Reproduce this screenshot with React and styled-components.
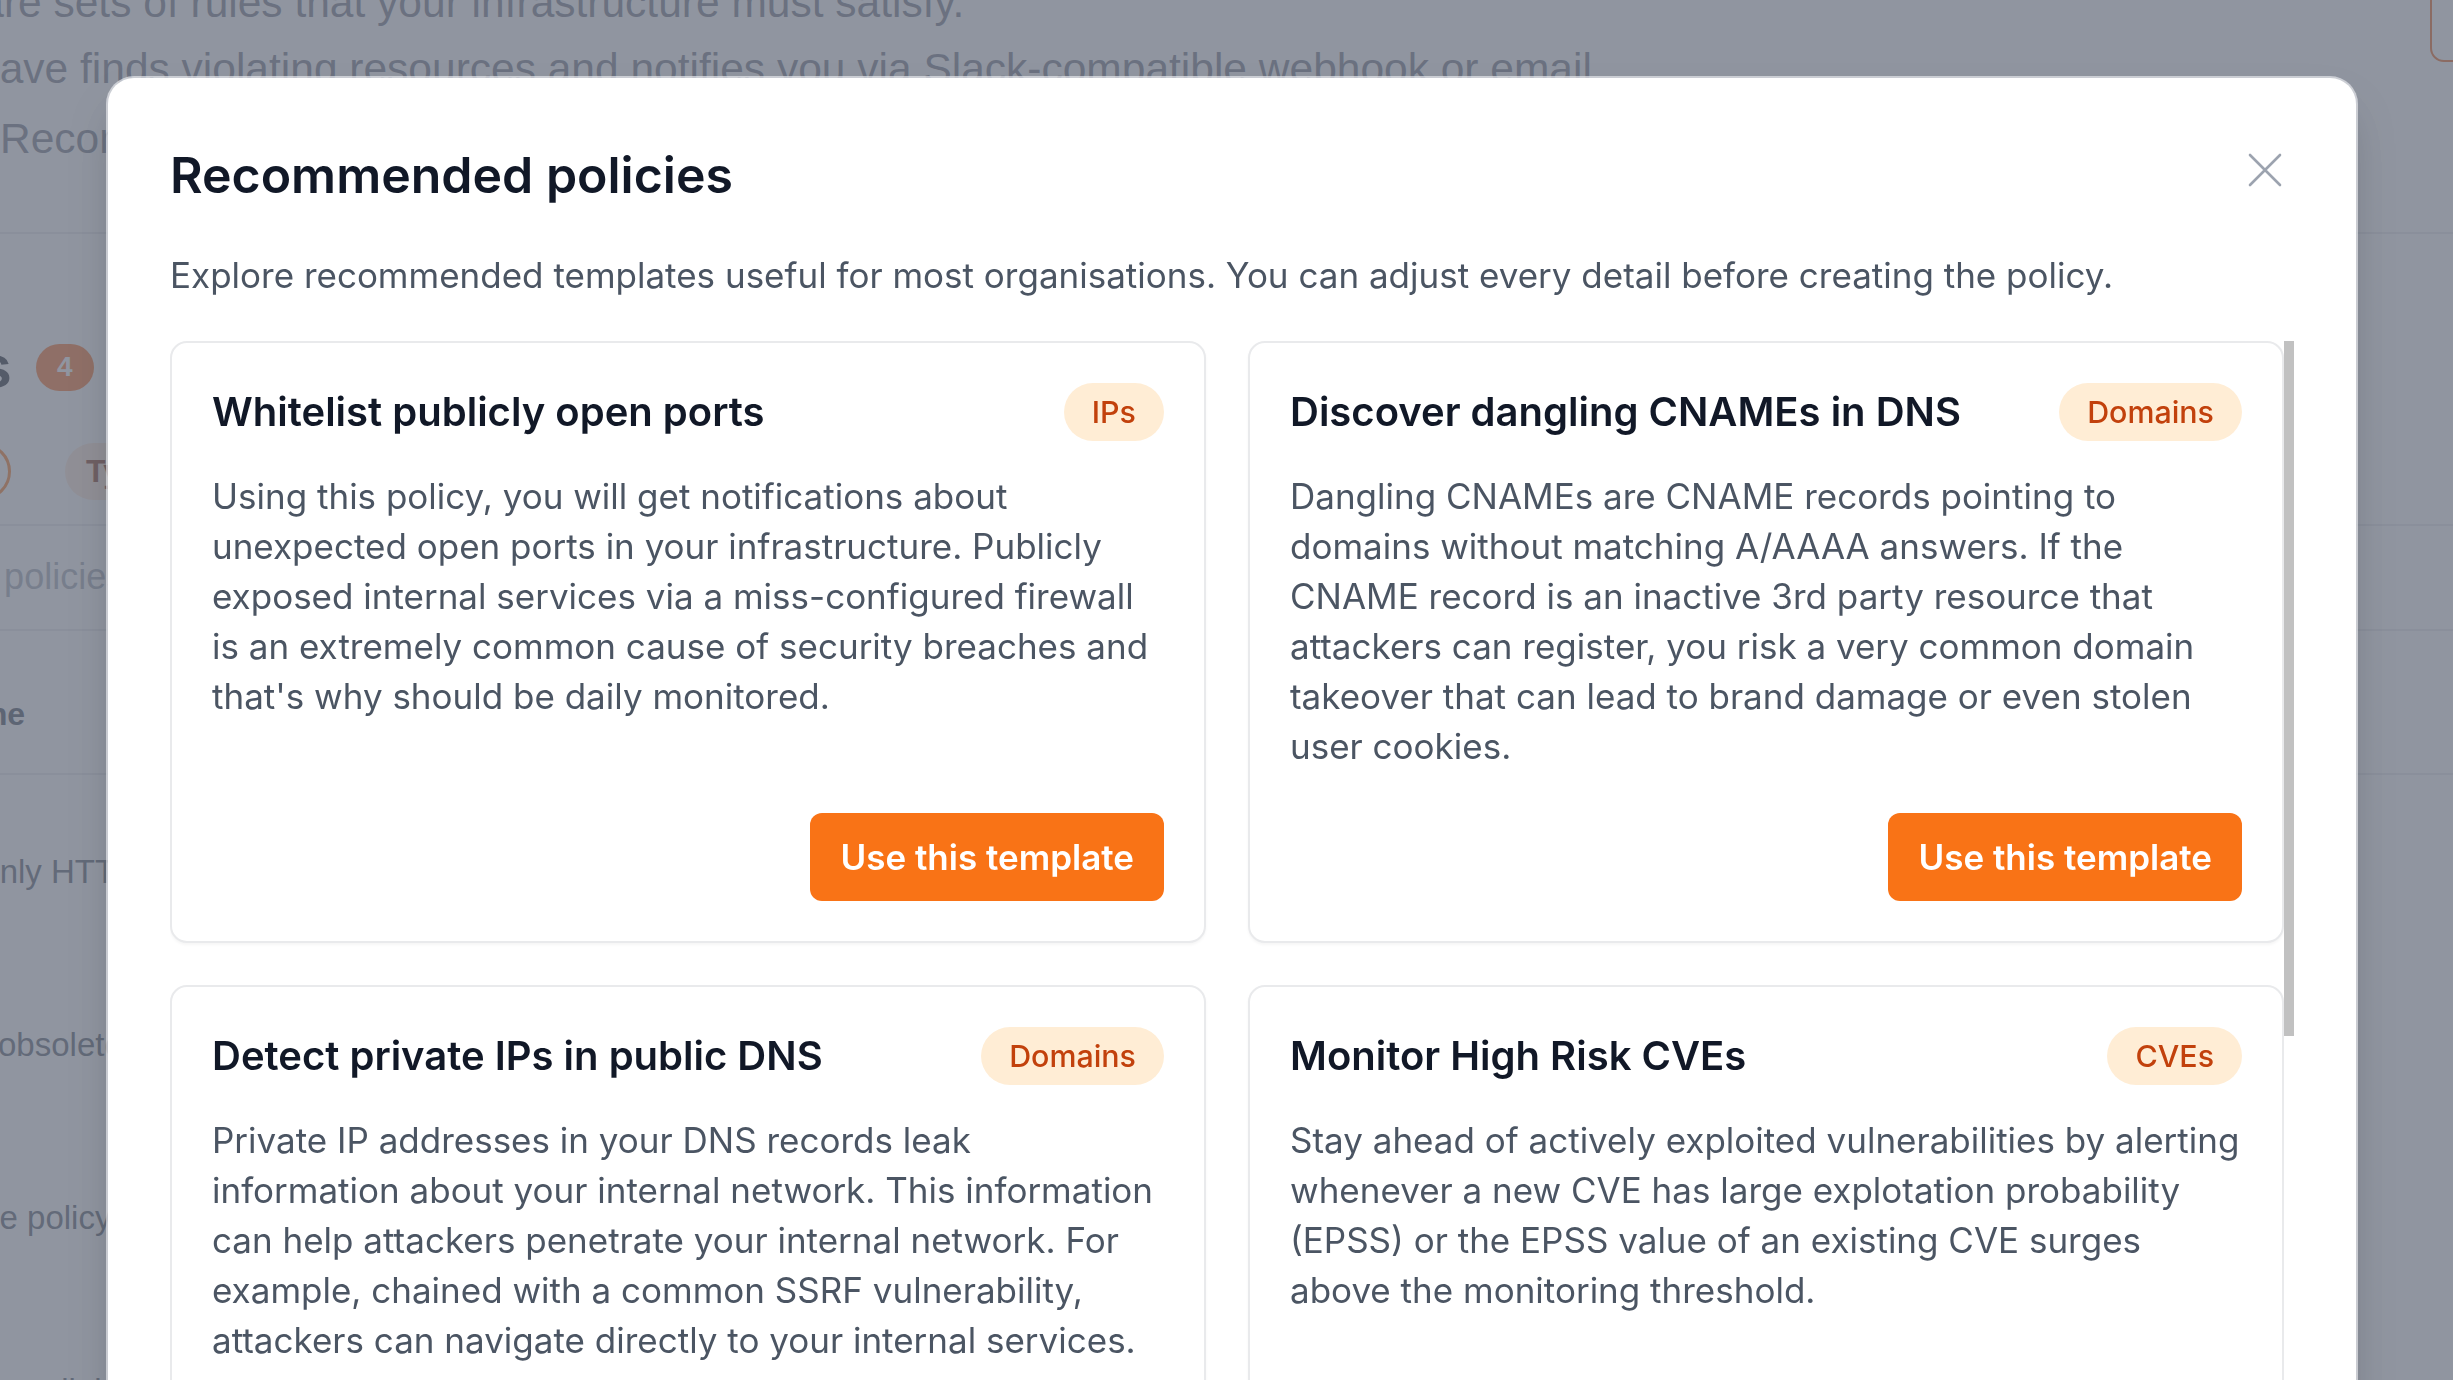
import React, { useLayoutEffect, useRef, useState } from "react";
import styled, { createGlobalStyle } from "styled-components";

const GlobalStyle = createGlobalStyle`
  * { box-sizing: border-box; }
  html, body {
    margin: 0;
    padding: 0;
    height: 100%;
    overflow: hidden;
    background: #ffffff;
  }
  body {
    font-family: Inter, "Noto Sans", sans-serif;
    -webkit-font-smoothing: antialiased;
  }
`;

// ---------- page behind the dialog ----------

const Page = styled.div`
  height: 1380px;
  overflow: hidden;
  font-family: "Liberation Sans", Arial, sans-serif;
  color: #6b7280;
`;

const TopBar = styled.div`
  display: flex;
  justify-content: space-between;
  align-items: flex-start;
`;

const Intro = styled.div`
  margin-top: -30px;
`;

const IntroLine = styled.p`
  margin: 0 0 0 ${(p) => p.$shift}px;
  font-size: 42.5px;
  line-height: 66px;
  white-space: nowrap;
`;

const RecLink = styled(IntroLine)`
  margin-top: 4px;
`;

const GhostButton = styled.button`
  margin: -30px -140px 0 0;
  width: 163px;
  height: 92px;
  border: 2px solid #ea580c;
  border-radius: 14px;
  background: transparent;
`;

const Rule = styled.div`
  height: 2px;
  background: #e5e7eb;
  margin-top: ${(p) => p.$gap}px;
`;

const SectionHead = styled.div`
  display: flex;
  align-items: center;
  gap: 24px;
  margin: 97px 0 0 -215px;
`;

const SectionTitle = styled.h2`
  margin: 0;
  font-size: 60px;
  line-height: 72px;
  font-weight: 700;
  color: #111827;
`;

const CountBadge = styled.span`
  width: 58px;
  height: 47px;
  border-radius: 24px;
  background: #fb6a1c;
  color: #ffffff;
  font-size: 28px;
  font-weight: 700;
  display: flex;
  align-items: center;
  justify-content: center;
`;

const Filters = styled.div`
  display: flex;
  gap: 54px;
  margin: 40px 0 0 -215px;
`;

const SearchPill = styled.div`
  width: 226px;
  height: 57px;
  border: 3px solid #f97316;
  border-radius: 29px;
`;

const TypePill = styled.div`
  height: 57px;
  padding: 0 28px 0 21px;
  border-radius: 29px;
  background: #fde7d6;
  color: #7c2d12;
  font-size: 32px;
  font-weight: 700;
  display: flex;
  align-items: center;
`;

const Hint = styled.p`
  margin: 18px 0 0 ${(p) => p.$shift}px;
  font-size: 36px;
  line-height: 66px;
  color: #9ca3af;
  white-space: nowrap;
`;

const TableHead = styled.div`
  margin: 50px 0 0 ${(p) => p.$shift}px;
  font-size: 32px;
  line-height: 66px;
  font-weight: 700;
  color: #374151;
  white-space: nowrap;
`;

const Row = styled.div`
  height: 173px;
  padding-top: 20px;
  display: flex;
  align-items: center;
  margin-left: ${(p) => p.$shift}px;
  font-size: 33px;
  line-height: 40px;
  color: #4b5563;
  white-space: nowrap;
`;

// ---------- dialog ----------

const Overlay = styled.div`
  position: fixed;
  inset: 0;
  background: rgba(107, 114, 128, 0.75);
`;

const ModalLayer = styled.div`
  position: fixed;
  inset: 0;
  padding: 78px 0 0 108px;
  overflow: hidden;
`;

const Modal = styled.section`
  position: relative;
  width: 2248px;
  padding: 64px 62px 62px;
  background: #ffffff;
  border-radius: 26px;
  box-shadow: 0 0 0 2px rgba(229, 231, 235, 0.7), 0 25px 50px -12px rgba(0, 0, 0, 0.25);
`;

const CloseButton = styled.button`
  position: absolute;
  top: 75px;
  right: 74px;
  width: 34px;
  height: 34px;
  padding: 0;
  border: none;
  background: none;
  color: #9ca3af;
  display: flex;
`;

const Title = styled.h1`
  margin: 0;
  font-size: 50px;
  line-height: 67px;
  font-weight: 600;
  color: #111827;
`;

const Subtitle = styled.p`
  margin: 41px 0 0;
  font-size: 35px;
  line-height: 50px;
  color: #4b5563;
`;

const ScrollArea = styled.div`
  display: flex;
  margin-top: 41px;
  height: 1100px;
`;

const CardScroller = styled.div`
  flex: 1;
  min-width: 0;
  overflow-y: auto;
  scrollbar-width: none;

  &::-webkit-scrollbar {
    display: none;
  }
`;

const ScrollTrack = styled.div`
  flex-shrink: 0;
  width: 10px;
`;

const ScrollThumb = styled.div`
  width: 100%;
  background: #c1c1c1;
`;

const CardGrid = styled.div`
  display: grid;
  grid-template-columns: 1fr 1fr;
  gap: 42px;
`;

const Card = styled.article`
  display: flex;
  flex-direction: column;
  padding: 40px;
  border: 2px solid #e9eaec;
  border-radius: 17px;
  background: #ffffff;
  box-shadow: 0 2px 3px rgba(0, 0, 0, 0.04);
`;

const CardHead = styled.div`
  display: flex;
  align-items: center;
  justify-content: space-between;
  gap: 24px;
`;

const CardTitle = styled.h3`
  margin: 0;
  font-size: 40px;
  line-height: 58px;
  font-weight: 600;
  color: #111827;
`;

const Tag = styled.span`
  flex-shrink: 0;
  height: 58px;
  padding: 0 28px;
  border-radius: 29px;
  background: #ffedd5;
  color: #c2410c;
  font-size: 30.4px;
  line-height: 58px;
  font-weight: 500;
`;

const CardText = styled.p`
  flex: 1;
  margin: 30px 0 0;
  font-size: 35px;
  line-height: 50px;
  color: #4b5563;
`;

const UseButton = styled.button`
  align-self: flex-end;
  margin-top: 42px;
  height: 88px;
  padding: 0 30px;
  border: none;
  border-radius: 12px;
  background: #f97316;
  color: #ffffff;
  font-family: Inter, "Noto Sans", sans-serif;
  font-size: 35px;
  font-weight: 600;
`;

const templates = [
  {
    title: "Whitelist publicly open ports",
    tag: "IPs",
    text: "Using this policy, you will get notifications about unexpected open ports in your infrastructure. Publicly exposed internal services via a miss-configured firewall is an extremely common cause of security breaches and that's why should be daily monitored.",
  },
  {
    title: "Discover dangling CNAMEs in DNS",
    tag: "Domains",
    text: "Dangling CNAMEs are CNAME records pointing to domains without matching A/AAAA answers. If the CNAME record is an inactive 3rd party resource that attackers can register, you risk a very common domain takeover that can lead to brand damage or even stolen user cookies.",
  },
  {
    title: "Detect private IPs in public DNS",
    tag: "Domains",
    text: "Private IP addresses in your DNS records leak information about your internal network. This information can help attackers penetrate your internal network. For example, chained with a common SSRF vulnerability, attackers can navigate directly to your internal services.",
  },
  {
    title: "Monitor High Risk CVEs",
    tag: "CVEs",
    text: "Stay ahead of actively exploited vulnerabilities by alerting whenever a new CVE has large explotation probability (EPSS) or the EPSS value of an existing CVE surges above the monitoring threshold.",
  },
  {
    title: "Find websites without HTTPS",
    tag: "Domains",
    text: "Websites served only over plain HTTP expose credentials and session cookies to anyone on the network path. This policy alerts you whenever one of your domains answers without a valid TLS redirect.",
  },
  {
    title: "Detect obsolete TLS versions",
    tag: "IPs",
    text: "Services that still accept TLS 1.0 or 1.1 are vulnerable to well known downgrade attacks. Get notified when a host negotiates an obsolete protocol version or a weak cipher suite.",
  },
];

const CloseIcon = () => (
  <svg width="34" height="34" viewBox="0 0 34 34" fill="none" stroke="currentColor" strokeWidth="2.6" strokeLinecap="round">
    <path d="M2 2 32 32M32 2 2 32" />
  </svg>
);

const TemplateList = () => {
  const scrollRef = useRef(null);
  const [thumb, setThumb] = useState(0);

  useLayoutEffect(() => {
    const measure = () => {
      const el = scrollRef.current;
      if (!el) return;
      setThumb((el.clientHeight * el.clientHeight) / el.scrollHeight);
    };
    measure();
    if (document.fonts) document.fonts.ready.then(measure);
  }, []);

  return (
    <ScrollArea>
      <CardScroller ref={scrollRef}>
        <CardGrid>
          {templates.map((t) => (
            <Card key={t.title}>
              <CardHead>
                <CardTitle>{t.title}</CardTitle>
                <Tag>{t.tag}</Tag>
              </CardHead>
              <CardText>{t.text}</CardText>
              <UseButton>Use this template</UseButton>
            </Card>
          ))}
        </CardGrid>
      </CardScroller>
      <ScrollTrack>
        <ScrollThumb style={{ height: thumb }} />
      </ScrollTrack>
    </ScrollArea>
  );
};

const App = () => {
  return (
    <>
      <GlobalStyle />
      <Page>
        <TopBar>
          <Intro>
            <IntroLine $shift={-178}>Policies are sets of rules that your infrastructure must satisfy.</IntroLine>
            <IntroLine $shift={-83}>Enclave finds violating resources and notifies you via Slack-compatible webhook or email.</IntroLine>
            <RecLink $shift={0}>Recommended policies</RecLink>
          </Intro>
          <GhostButton aria-label="New policy" />
        </TopBar>
        <Rule $gap={60} />
        <SectionHead>
          <SectionTitle>Policies</SectionTitle>
          <CountBadge>4</CountBadge>
        </SectionHead>
        <Filters>
          <SearchPill />
          <TypePill>Type</TypePill>
        </Filters>
        <Rule $gap={24} />
        <Hint $shift={-190}>Showing all policies</Hint>
        <Rule $gap={19} />
        <TableHead $shift={-62}>Name</TableHead>
        <Rule $gap={26} />
        <Row $shift={-26}>Only HTTPS allowed</Row>
        <Row $shift={-2}>obsolete TLS protocols</Row>
        <Row $shift={-94}>Sample policy</Row>
        <Row $shift={-96}>Avoid unreliable name servers</Row>
      </Page>

      <Overlay />

      <ModalLayer>
        <Modal role="dialog" aria-labelledby="rec-title">
          <CloseButton aria-label="Close">
            <CloseIcon />
          </CloseButton>
          <Title id="rec-title">Recommended policies</Title>
          <Subtitle>
            Explore recommended templates useful for most organisations. You can adjust every detail before creating the policy.
          </Subtitle>
          <TemplateList />
        </Modal>
      </ModalLayer>
    </>
  );
};

export default App;
